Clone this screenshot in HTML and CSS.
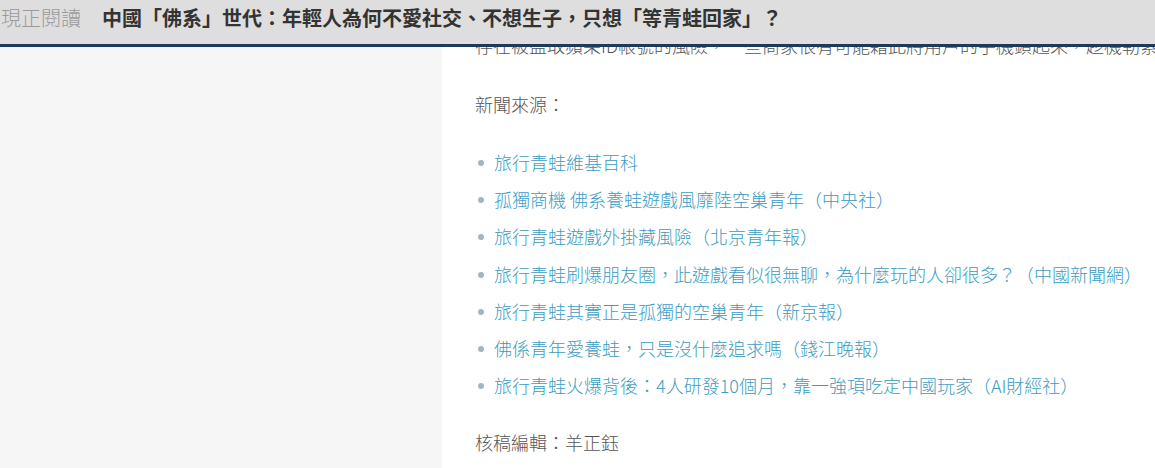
FILE: index.html
```html
<!DOCTYPE html>
<html lang="zh-Hant">
<head>
<meta charset="utf-8">
<title>中國「佛系」世代</title>
<link rel="stylesheet" href="styles.css">
</head>
<body>
<header class="readbar">
  <span class="readbar-label">現正閱讀</span>
  <span class="readbar-title">中國「佛系」世代：年輕人為何不愛社交、不想生子，只想「等青蛙回家」？</span>
</header>
<div class="page">
  <aside class="side"></aside>
  <main class="article">
    <p class="para para-clipped">存在被盜取蘋果ID帳號的風險，一些商家很有可能藉此將用戶的手機鎖起來，趁機勒索贖金。</p>
    <p class="para">新聞來源：</p>
    <ul class="sources">
      <li class="source"><a class="source-link" href="#">旅行青蛙維基百科</a></li>
      <li class="source"><a class="source-link" href="#">孤獨商機 佛系養蛙遊戲風靡陸空巢青年（中央社）</a></li>
      <li class="source"><a class="source-link" href="#">旅行青蛙遊戲外掛藏風險（北京青年報）</a></li>
      <li class="source"><a class="source-link" href="#">旅行青蛙刷爆朋友圈，此遊戲看似很無聊，為什麼玩的人卻很多？（中國新聞網）</a></li>
      <li class="source"><a class="source-link" href="#">旅行青蛙其實正是孤獨的空巢青年（新京報）</a></li>
      <li class="source"><a class="source-link" href="#">佛係青年愛養蛙，只是沒什麼追求嗎（錢江晚報）</a></li>
      <li class="source"><a class="source-link" href="#">旅行青蛙火爆背後：4人研發10個月，靠一強項吃定中國玩家（AI財經社）</a></li>
    </ul>
    <p class="para">核稿編輯：羊正鈺</p>
  </main>
</div>
</body>
</html>
```
FILE: styles.css
```css
html, body {
  margin: 0;
  padding: 0;
  overflow: hidden;
  height: 100%;
}
body {
  font-family: "Noto Sans CJK TC", "Noto Sans", "Liberation Sans", sans-serif;
  background: #ffffff;
  width: 1155px;
}
.readbar {
  position: fixed;
  top: 0;
  left: 0;
  right: 0;
  height: 44px;
  background: #dedede;
  border-bottom: 3px solid #1d3a5c;
  display: flex;
  align-items: flex-start;
  font-size: 20px;
  line-height: 36px;
  white-space: nowrap;
  z-index: 10;
}
.readbar-label {
  color: #9a9a9a;
  font-weight: 300;
  padding-left: 1px;
}
.readbar-title {
  color: #333333;
  font-weight: 700;
  margin-left: 21px;
}
.page {
  display: flex;
  min-height: 468px;
}
.side {
  flex: 0 0 442px;
  background: #f6f6f6;
}
.article {
  flex: 0 0 auto;
  width: 800px;
  padding: 35px 0 0 33px;
  color: #555555;
  font-size: 18px;
  font-weight: 300;
  line-height: 29px;
  white-space: nowrap;
}
.para {
  margin: 0 0 26px;
}
.para-clipped {
  margin-top: -4px;
  margin-bottom: 30px;
}
.sources {
  list-style: none;
  margin: 29px 0 28px;
  padding: 0;
}
.source {
  position: relative;
  padding-left: 19px;
  margin-bottom: 8.2px;
}
.source::before {
  content: "";
  position: absolute;
  left: 3px;
  top: 12px;
  width: 6px;
  height: 6px;
  border-radius: 50%;
  background: #a3b6c0;
}
.source-link {
  color: #3c9cc2;
  text-decoration: none;
}
```
